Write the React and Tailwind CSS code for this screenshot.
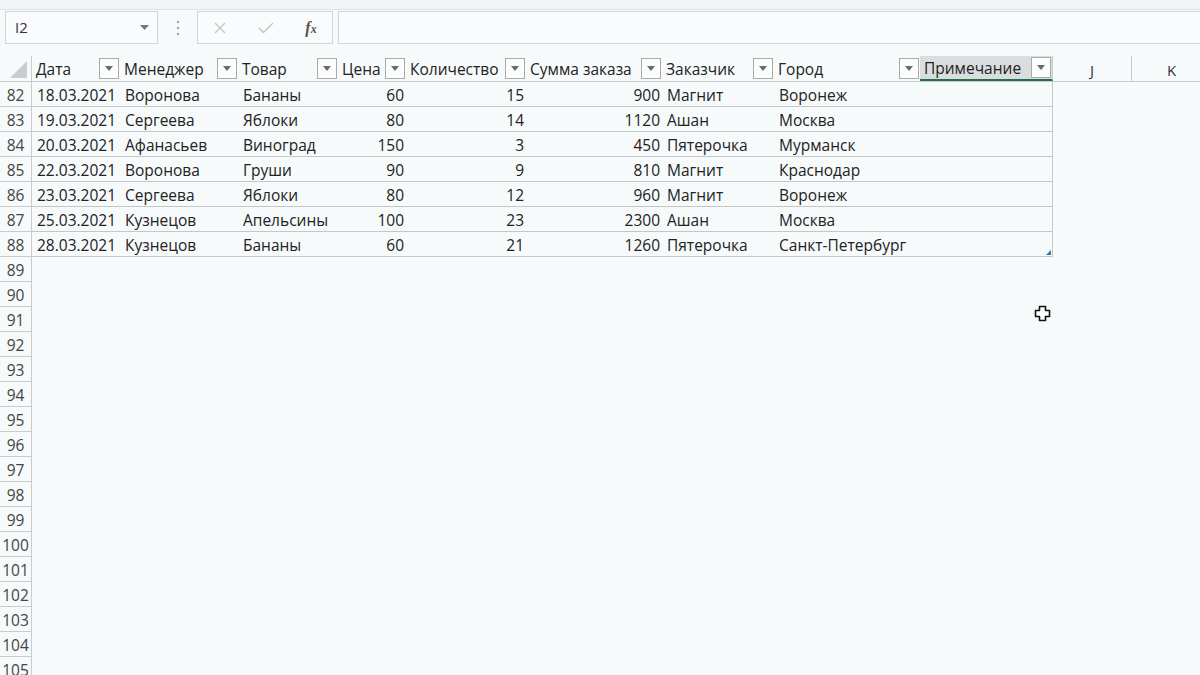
import React from "react";

const cols = [
  { name: "Дата", w: 88, align: "left" },
  { name: "Менеджер", w: 118, align: "left" },
  { name: "Товар", w: 100, align: "left" },
  { name: "Цена", w: 68, align: "right" },
  { name: "Количество", w: 120, align: "right" },
  { name: "Сумма заказа", w: 136, align: "right" },
  { name: "Заказчик", w: 112, align: "left" },
  { name: "Город", w: 146, align: "left" },
  { name: "Примечание", w: 133, align: "left" },
];

const rows = [
  ["18.03.2021", "Воронова", "Бананы", "60", "15", "900", "Магнит", "Воронеж", ""],
  ["19.03.2021", "Сергеева", "Яблоки", "80", "14", "1120", "Ашан", "Москва", ""],
  ["20.03.2021", "Афанасьев", "Виноград", "150", "3", "450", "Пятерочка", "Мурманск", ""],
  ["22.03.2021", "Воронова", "Груши", "90", "9", "810", "Магнит", "Краснодар", ""],
  ["23.03.2021", "Сергеева", "Яблоки", "80", "12", "960", "Магнит", "Воронеж", ""],
  ["25.03.2021", "Кузнецов", "Апельсины", "100", "23", "2300", "Ашан", "Москва", ""],
  ["28.03.2021", "Кузнецов", "Бананы", "60", "21", "1260", "Пятерочка", "Санкт-Петербург", ""],
];

const emptyRows = Array.from({ length: 17 }, (_, i) => 89 + i);

function FilterButton() {
  return (
    <div className="flex h-[21px] w-[20px] shrink-0 items-center justify-center border border-[#ababab] bg-[#fbfcfc]">
      <svg width="8" height="5" viewBox="0 0 8 5">
        <path d="M0 0h8L4 5z" fill="#6b6b6b" />
      </svg>
    </div>
  );
}

function RowNum({ n }) {
  return (
    <div className="flex h-[25px] w-[32px] shrink-0 items-center justify-center border-b border-r border-[#c9cbcd] pt-[3px] text-[15.5px] text-[#444]">
      {n}
    </div>
  );
}

export default function App() {
  return (
    <div
      className="relative h-[675px] w-[1200px] overflow-hidden bg-[#f7fafb] text-[#222]"
      style={{ fontFamily: '"Open Sans", "Noto Sans", sans-serif' }}
    >
      {/* ribbon edge */}
      <div className="h-[10px] border-b border-[#e1e4e6] bg-[#f1f4f5]" />

      {/* formula bar */}
      <div className="flex h-[35px] items-center pl-[5px]">
        <div className="flex h-[33px] w-[153px] items-center justify-between border border-[#d2d4d6] bg-[#f9fbfc] pl-[9px] pr-[8px] text-[15px] text-[#333]">
          <span>I2</span>
          <svg width="9" height="5" viewBox="0 0 9 5">
            <path d="M0 0h9L4.5 5z" fill="#777" />
          </svg>
        </div>
        <div className="flex w-[39px] justify-center">
          <svg width="4" height="16" viewBox="0 0 4 16">
            <circle cx="2" cy="2" r="1.3" fill="#aaa" />
            <circle cx="2" cy="8" r="1.3" fill="#aaa" />
            <circle cx="2" cy="14" r="1.3" fill="#aaa" />
          </svg>
        </div>
        <div className="flex h-[33px] w-[136px] items-center border border-[#d2d4d6] bg-[#f9fbfc]">
          <div className="flex w-[44px] justify-center">
            <svg width="12" height="12" viewBox="0 0 12 12">
              <path d="M1 1l10 10M11 1L1 11" stroke="#c4c4c4" strokeWidth="1.2" />
            </svg>
          </div>
          <div className="flex w-[48px] justify-center">
            <svg width="16" height="12" viewBox="0 0 16 12">
              <path d="M1 6l4.5 4.5L15 1" stroke="#c4c4c4" strokeWidth="1.4" fill="none" />
            </svg>
          </div>
          <div
            className="flex w-[42px] items-baseline justify-center text-[16px] font-bold italic leading-none text-[#555]"
            style={{ fontFamily: '"Liberation Serif", serif' }}
          >
            <span>f</span>
            <span className="text-[12px]">x</span>
          </div>
        </div>
        <div className="ml-[5px] h-[33px] flex-1 border border-r-0 border-[#d2d4d6] bg-[#f9fbfc]" />
      </div>

      {/* column headers */}
      <div className="mt-[11px] flex h-[26px] border-b border-[#c9cbcd]">
        <div className="flex w-[32px] shrink-0 items-end justify-end border-r border-[#c9cbcd] pb-[3px] pr-[4px]">
          <svg width="17" height="17" viewBox="0 0 17 17">
            <path d="M17 0V17H0z" fill="#c9cbcd" />
          </svg>
        </div>
        {cols.map((c, i) => {
          const sel = i === cols.length - 1;
          return (
            <div
              key={c.name}
              style={{ width: c.w }}
              className={
                "flex shrink-0 items-center justify-between pr-[1px] " +
                (sel ? "border-b-2 border-r border-b-[#217346] border-r-[#c9cbcd] bg-[#dadddf]" : "")
              }
            >
              <span className="whitespace-nowrap pl-[4px] pt-[3px] text-[15.5px] text-[#222]">{c.name}</span>
              <FilterButton />
            </div>
          );
        })}
        <div className="flex w-[79px] shrink-0 items-center justify-center border-r border-[#c9cbcd] pt-[3px] text-[15px] text-[#333]">
          J
        </div>
        <div className="flex w-[80px] shrink-0 items-center justify-center border-r border-[#c9cbcd] pt-[3px] text-[15px] text-[#333]">
          K
        </div>
      </div>

      {/* table rows */}
      {rows.map((r, ri) => (
        <div key={ri} className="flex h-[25px]">
          <RowNum n={82 + ri} />
          <div className="relative flex border-b border-r border-[#c4c6c8]">
            {r.map((v, ci) => (
              <div
                key={ci}
                style={{ width: ci === cols.length - 1 ? cols[ci].w - 1 : cols[ci].w }}
                className={
                  "flex shrink-0 items-center whitespace-nowrap pt-[3px] text-[15.5px] " +
                  (cols[ci].align === "right" ? "justify-end pr-[2px]" : "pl-[5px]")
                }
              >
                {v}
              </div>
            ))}
            {ri === rows.length - 1 && (
              <svg className="absolute bottom-[1px] right-[1px]" width="5" height="5" viewBox="0 0 5 5">
                <path d="M5 0V5H0z" fill="#3a6fa8" />
              </svg>
            )}
          </div>
        </div>
      ))}

      {emptyRows.map((n) => (
        <div key={n} className="flex h-[25px]">
          <RowNum n={n} />
        </div>
      ))}

      {/* mouse cursor */}
      <svg className="absolute left-[1034px] top-[305px]" width="17" height="17" viewBox="0 0 17 17">
        <path
          d="M5.5 1.5h6v4h4v6h-4v4h-6v-4h-4v-6h4z"
          fill="#fff"
          stroke="#111"
          strokeWidth="1.6"
          strokeLinejoin="round"
        />
      </svg>
    </div>
  );
}
